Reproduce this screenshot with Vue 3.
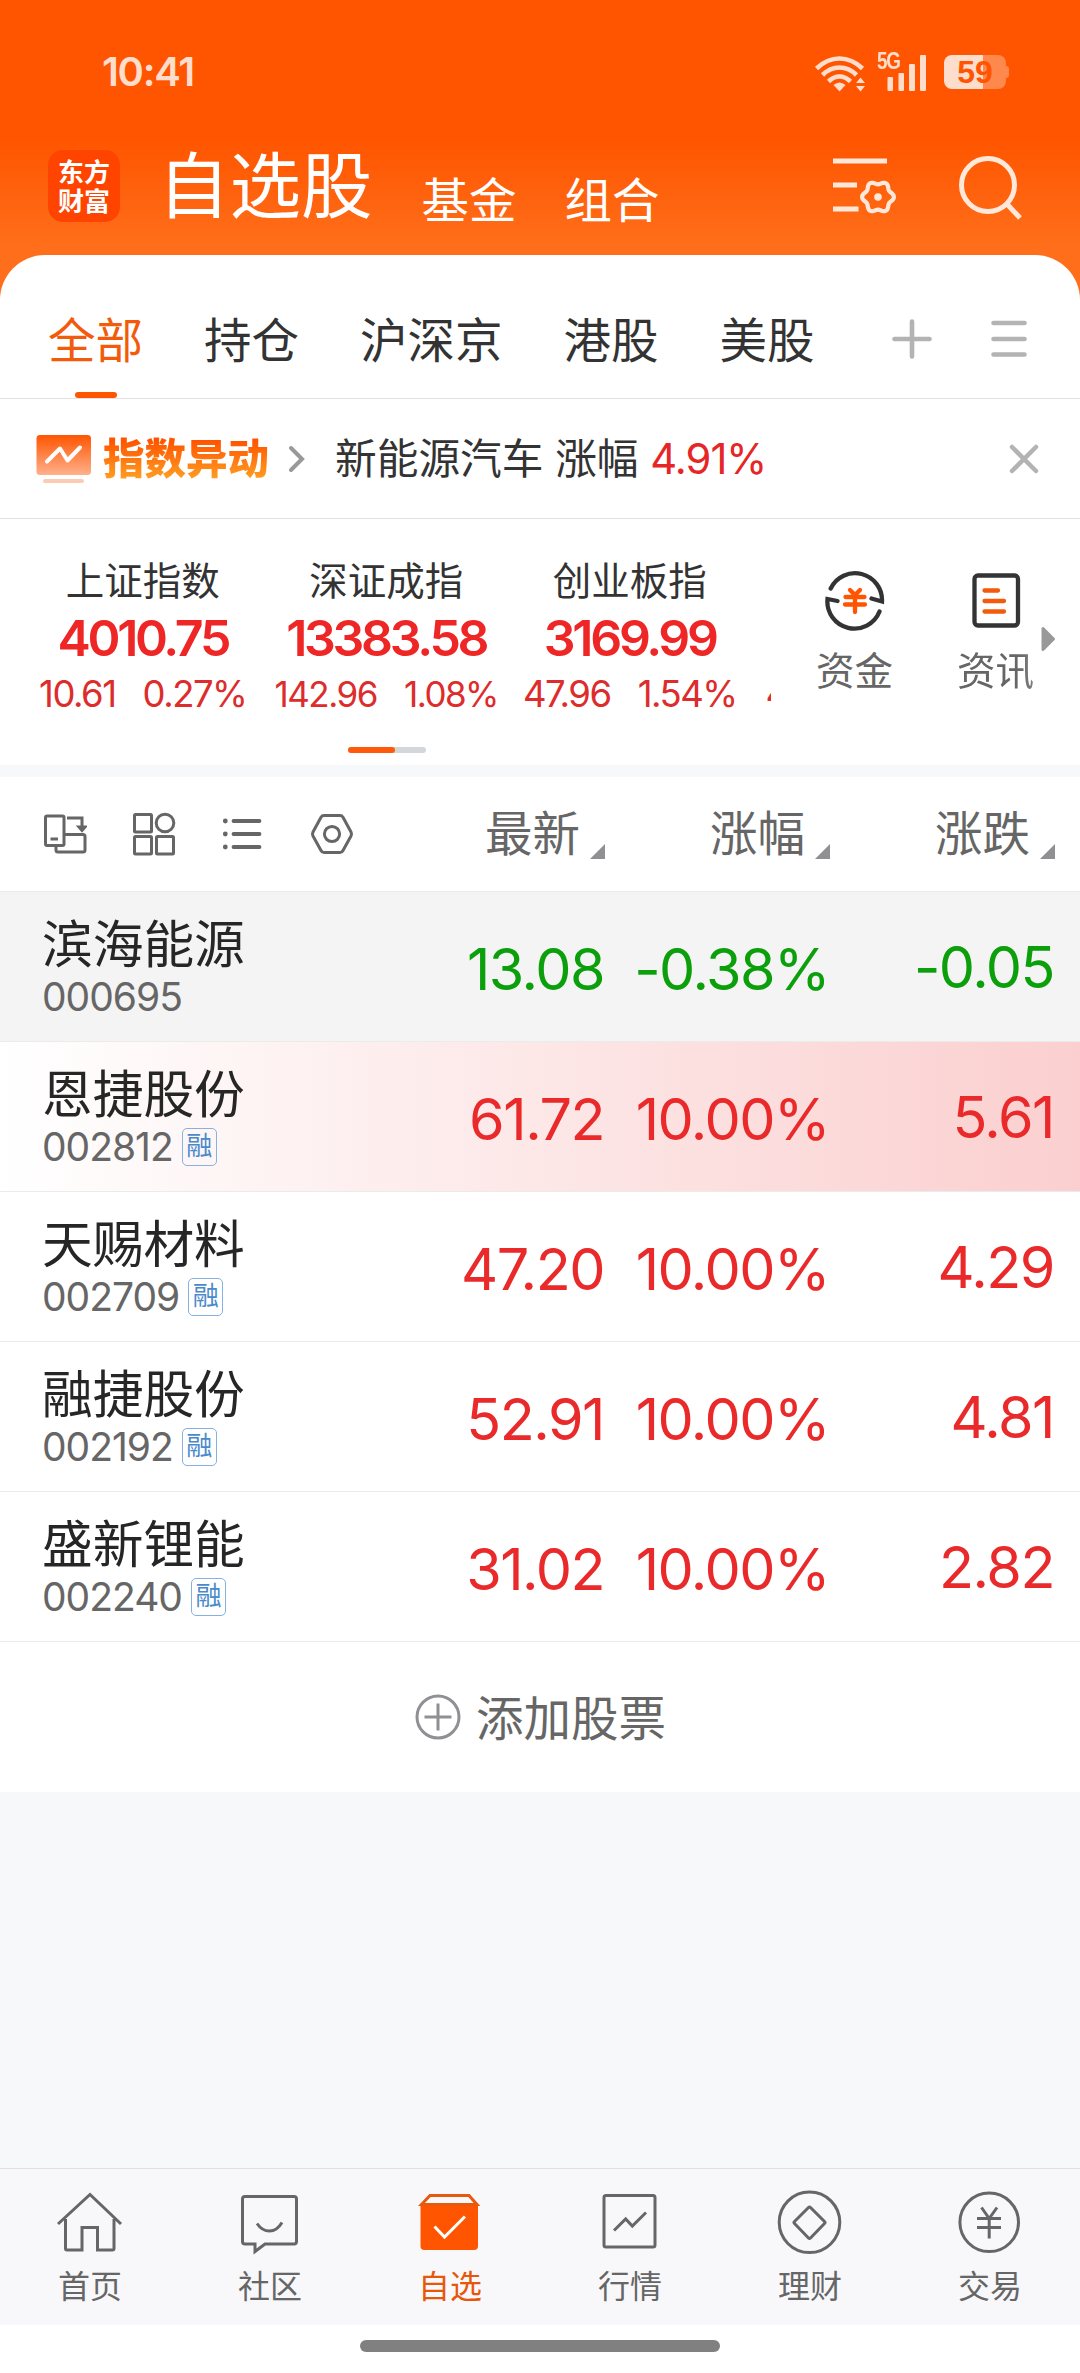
<script setup>
import { ref, computed } from 'vue'

const tabs = ['全部', '持仓', '沪深京', '港股', '美股']
const activeTab = ref('全部')

const indices = [
  { name: '上证指数', value: '4010.75', diff: '10.61', pct: '0.27%' },
  { name: '深证成指', value: '13383.58', diff: '142.96', pct: '1.08%', small: true },
  { name: '创业板指', value: '3169.99', diff: '47.96', pct: '1.54%' }
]

const columns = ['最新', '涨幅', '涨跌']

const stocks = ref([
  { name: '滨海能源', code: '000695', price: '13.08', pct: '-0.38%', diff: '-0.05', margin: false, state: 'pinned' },
  { name: '恩捷股份', code: '002812', price: '61.72', pct: '10.00%', diff: '5.61', margin: true, state: 'flash' },
  { name: '天赐材料', code: '002709', price: '47.20', pct: '10.00%', diff: '4.29', margin: true, state: '' },
  { name: '融捷股份', code: '002192', price: '52.91', pct: '10.00%', diff: '4.81', margin: true, state: '' },
  { name: '盛新锂能', code: '002240', price: '31.02', pct: '10.00%', diff: '2.82', margin: true, state: '' }
])

const navItems = ['首页', '社区', '自选', '行情', '理财', '交易']
const activeNav = ref('自选')

const trend = (stock) => (stock.diff.startsWith('-') ? 'down' : 'up')

// Six-lobed gear outline
const gearPath = computed(() => {
  const points = []
  for (let i = 0; i < 72; i++) {
    const a = (i * 5 * Math.PI) / 180
    const r = 14.3 + 1.6 * Math.cos(6 * a)
    points.push(`${(49 + r * Math.cos(a)).toFixed(2)} ${(41 + r * Math.sin(a)).toFixed(2)}`)
  }
  return `M${points.join('L')}Z`
})
</script>

<template>
  <div class="screen">
    <header class="header">
      <div class="status">
        <span class="time">10:41</span>
        <div class="status-icons">
          <svg class="wifi" viewBox="0 0 52 40" width="52" height="40">
            <g fill="none" stroke="#ffddcc" stroke-width="4.6">
              <path d="M2.5 16.5Q13 6.500 25.500 6.500T48.500 16.500" />
              <path d="M8.500 23Q16 15.500 25.500 15.500T42.500 23" />
              <path d="M14.500 29.500Q19.500 24.500 25.500 24.500T36.500 29.500" />
            </g>
            <path d="M19.500 33Q25.500 28 31.500 33L25.500 39.500Z" fill="#ffddcc" />
            <path d="M42 31L46.500 25.500L51 31ZM42 34L46.500 39.500L51 34Z" fill="#ffddcc" />
          </svg>
          <div class="signal">
            <span class="net">5G</span>
            <svg viewBox="0 0 40 38" width="40" height="38" fill="#ffddcc">
              <rect x="0.500" y="24" width="5.500" height="14" rx="1" />
              <rect x="11.500" y="20" width="5.500" height="18" rx="1" />
              <rect x="22" y="11" width="6" height="27" rx="1" />
              <rect x="33" y="2" width="6" height="36" rx="1" />
            </svg>
          </div>
          <div class="battery"><span>59</span></div>
        </div>
      </div>

      <div class="title-bar">
        <div class="logo"><span>东方</span><span>财富</span></div>
        <h1>自选股</h1>
        <span class="section">基金</span>
        <span class="section">组合</span>
        <svg class="filter" viewBox="0 0 68 64" width="68" height="64" fill="none" stroke="#ffe8da" stroke-width="5">
          <path d="M4 5H58M4 29H28M4 53H29.500" />
          <path :d="gearPath" stroke-width="4.200" />
          <circle cx="49" cy="41" r="3.800" fill="#ffe8da" stroke="none" />
        </svg>
        <svg class="search" viewBox="0 0 66 68" width="66" height="68" fill="none" stroke="#ffe8da" stroke-width="5">
          <circle cx="30" cy="32" r="26.500" />
          <path d="M49 51L62 65" />
        </svg>
      </div>
    </header>

    <main class="panel">
      <nav class="tabs">
        <span
          v-for="tab in tabs"
          :key="tab"
          class="tab"
          :class="{ active: tab === activeTab }"
          @click="activeTab = tab"
        >{{ tab }}</span>
        <svg class="tab-icon plus" viewBox="0 0 42 42" width="42" height="42">
          <path d="M21 3.500V38.500M3.500 21H38.500" />
        </svg>
        <svg class="tab-icon" viewBox="0 0 42 42" width="42" height="42">
          <path d="M5.500 5H36.500M5.500 21H36.500M5.500 36.500H36.500" />
        </svg>
      </nav>

      <div class="notice">
        <svg class="notice-icon" viewBox="0 0 56 50" width="56" height="50">
          <defs>
            <linearGradient id="noticeFill" x1="0" y1="0" x2="0" y2="1">
              <stop offset="0" stop-color="#ff5500" />
              <stop offset="1" stop-color="#ffb08c" />
            </linearGradient>
          </defs>
          <rect x="0.500" y="1" width="54.500" height="40" rx="3.500" fill="url(#noticeFill)" />
          <path d="M11 27.500L24 14.500L31.500 26.500L44 13.500" fill="none" stroke="#fff" stroke-width="4" stroke-linecap="round" stroke-linejoin="round" />
          <rect x="7" y="45" width="41" height="4" rx="2" fill="#fbcbb4" />
        </svg>
        <strong class="notice-title">指数异动</strong>
        <svg class="chevron" viewBox="0 0 18 30" width="18" height="30">
          <path d="M3 4L14 15L3 26" fill="none" stroke="#999" stroke-width="4" stroke-linecap="round" />
        </svg>
        <span class="notice-text">新能源汽车 涨幅 <em>4.91%</em></span>
        <svg class="close" viewBox="0 0 34 34" width="34" height="34">
          <path d="M5 5L29 29M29 5L5 29" fill="none" stroke="#b3b3b3" stroke-width="4.500" stroke-linecap="round" />
        </svg>
      </div>

      <section class="market">
        <div class="indices">
          <div v-for="item in indices" :key="item.name" class="index">
            <span class="index-name">{{ item.name }}</span>
            <span class="index-value">{{ item.value }}</span>
            <span class="index-change" :class="{ small: item.small }">
              <span>{{ item.diff }}</span><span>{{ item.pct }}</span>
            </span>
          </div>
          <div class="index peek"><span class="index-change">4</span></div>
        </div>
        <div class="shortcuts">
          <div class="shortcut">
            <svg viewBox="0 0 60 60" width="60" height="60" fill="none" stroke-linecap="round">
              <g stroke="#333" stroke-width="4.300">
                <path d="M5.700 17.500A27 27 0 0 1 57 30.500L46.500 27.500" />
                <path d="M54.500 40.500A27 27 0 0 1 2.500 28L12.500 30" />
              </g>
              <path d="M25 19L30 24L35 19M30 24V41M20.500 26H39.500M20 33.500H40" stroke="#ff5500" stroke-width="4.300" />
            </svg>
            <span>资金</span>
          </div>
          <div class="shortcut faded">
            <svg viewBox="0 0 60 60" width="60" height="60" fill="none" stroke-linecap="round">
              <rect x="8.500" y="4.500" width="43.500" height="50" rx="3.500" stroke="#333" stroke-width="4.300" />
              <path d="M18.500 19.500H32M18.500 30H38M18.500 40.500H38" stroke="#f25a0c" stroke-width="4.300" />
            </svg>
            <span>资讯</span>
          </div>
          <svg class="more" viewBox="0 0 16 26" width="16" height="26">
            <path d="M3 2.500V23.500L13.500 13Z" fill="#999" stroke="#999" stroke-width="3" stroke-linejoin="round" />
          </svg>
        </div>
      </section>
      <div class="pager"><i></i></div>

      <section class="table">
        <div class="row table-head">
          <div class="tools">
            <svg viewBox="0 0 44 44" width="44" height="44">
              <rect x="2.500" y="4" width="18.500" height="29.500" rx="1.500" />
              <path d="M7.500 27H15M21 22.500H40Q42 22.500 42 24.500V38Q42 40 40 40H15Q13 40 13 38V34M24 6H39V15" />
              <path d="M36 15H42L39 18.500Z" />
            </svg>
            <svg viewBox="0 0 44 44" width="44" height="44">
              <rect x="2.500" y="2.500" width="17" height="17.500" rx="1" />
              <circle cx="33" cy="11" r="8.800" />
              <rect x="2.500" y="24.500" width="17" height="17.500" rx="1" />
              <rect x="24.500" y="24.500" width="17" height="17.500" rx="1" />
            </svg>
            <svg viewBox="0 0 44 44" width="44" height="44">
              <path d="M12.500 9H38.500M12.500 22H38.500M12.500 35H38.500" stroke-width="3.800" stroke-linecap="round" />
              <path d="M4.300 9V9.100M4.300 22V22.100M4.300 35V35.100" stroke-width="4.800" stroke-linecap="round" />
            </svg>
            <svg viewBox="0 0 44 44" width="44" height="44">
              <path d="M14 3.500H30Q32 3.500 33 5.200L41 20Q42 22 41 24L33 38.500Q32 40.500 30 40.500H14Q12 40.500 11 38.500L3 24Q2 22 3 20L11 5.200Q12 3.500 14 3.500Z" />
              <circle cx="22" cy="22" r="7.600" />
            </svg>
          </div>
          <div v-for="column in columns" :key="column" class="column">
            {{ column }}<i class="sort"></i>
          </div>
        </div>

        <div v-for="stock in stocks" :key="stock.code" class="row stock" :class="stock.state">
          <div class="stock-info">
            <div class="stock-name">{{ stock.name }}</div>
            <div class="stock-code">
              {{ stock.code }}<span v-if="stock.margin" class="tag">融</span>
            </div>
          </div>
          <span class="num" :class="trend(stock)">{{ stock.price }}</span>
          <span class="num" :class="trend(stock)">{{ stock.pct }}</span>
          <span class="num last" :class="trend(stock)">{{ stock.diff }}</span>
        </div>

        <div class="add">
          <svg viewBox="0 0 48 48" width="48" height="48" fill="none" stroke="#8f8f94" stroke-width="3">
            <circle cx="24" cy="24" r="21" />
            <path d="M24 10.500V37.500M10.500 24H37.500" />
          </svg>
          <span>添加股票</span>
        </div>
      </section>
    </main>

    <footer class="bottom-nav">
      <div
        v-for="item in navItems"
        :key="item"
        class="nav-item"
        :class="{ active: item === activeNav }"
        @click="activeNav = item"
      >
        <svg viewBox="0 0 72 72" width="72" height="72">
          <path v-if="item === '首页'" d="M4 38L36 8.500L67 38M11.500 33V62.500Q11.500 64 13 64H28V41.500H43.500V64H58.500Q60 64 60 62.500V33" />
          <g v-else-if="item === '社区'">
            <path d="M11 10.500H60Q62.500 10.500 62.500 13V55.500Q62.500 58 60 58H31L21 65.500V58H11Q8.500 58 8.500 55.500V13Q8.500 10.500 11 10.500Z" />
            <path d="M23 37.500Q28 45 35.500 45T48 36.500" />
          </g>
          <g v-else-if="item === '自选'">
            <path class="solid" d="M6.500 18H64V60Q64 64 60 64H10.500Q6.500 64 6.500 60Z" />
            <path d="M7.500 18.500L16 9.500H55L63 18.500Z" />
            <path class="check" d="M20.500 40.500L30.500 51L51 30.500" />
          </g>
          <g v-else-if="item === '行情'">
            <rect x="10" y="9.500" width="51" height="51.500" rx="2" />
            <path d="M20 44.500L31.700 33L38.300 40L52 26.500" />
          </g>
          <g v-else-if="item === '理财'">
            <circle cx="35.500" cy="36.300" r="30.300" />
            <path d="M34.500 21.500Q35.500 20.500 36.500 21.500L50.500 35.500Q51.500 36.500 50.500 37.500L36.500 52Q35.500 53 34.500 52L20.500 37.500Q19.500 36.500 20.500 35.500Z" />
          </g>
          <g v-else>
            <circle cx="35.200" cy="36.300" r="29.300" />
            <path d="M27.500 21.500L35.200 32.500L43 21.500M35.200 32V52.500M23 32.500H47M23 41.500H47" />
          </g>
        </svg>
        <span>{{ item }}</span>
      </div>
    </footer>
    <div class="home-area"><div class="home-bar"></div></div>
  </div>
</template>

<style>
body {
  background: #f7f8fa;
}
</style>

<style scoped>
.screen {
  width: 1080px;
  height: 2373px;
  display: flex;
  flex-direction: column;
  overflow: hidden;
  background: #f7f8fa;
  color: #333;
  font-family: Inter, "Noto Sans CJK SC", sans-serif;
  white-space: nowrap;
}
.screen * {
  box-sizing: border-box;
}
svg {
  display: block;
  flex: none;
}

/* header */
.header {
  height: 300px;
  flex: none;
  background: linear-gradient(#ff5500 0, #ff5500 140px, #ff6e1a 245px);
}
.status {
  height: 140px;
  padding: 3px 74px 0 102px;
  display: flex;
  align-items: center;
  justify-content: space-between;
}
.time {
  font-size: 40px;
  font-weight: 600;
  letter-spacing: -1.3px;
  color: #ffddcc;
}
.status-icons {
  display: flex;
  align-items: center;
}
.wifi {
  margin-right: 11px;
}
.signal {
  position: relative;
  margin-right: 17px;
  padding-left: 10px;
}
.net {
  position: absolute;
  left: 0;
  top: -2px;
  font: 700 23px/20px "Liberation Sans", sans-serif;
  letter-spacing: -1.5px;
  transform: scaleX(0.82);
  transform-origin: 0 50%;
  color: #ffddcc;
}
.battery {
  position: relative;
  width: 62px;
  height: 34px;
  border-radius: 8px;
  background: linear-gradient(90deg, #ffddcc 39px, #ff884d 39px);
  text-align: center;
}
.battery::after {
  content: "";
  position: absolute;
  right: -3px;
  top: 11px;
  width: 3px;
  height: 12px;
  border-radius: 0 3px 3px 0;
  background: #ff884d;
}
.battery span {
  font: 700 32px/35px "Liberation Sans", sans-serif;
  color: #ff5500;
}
.title-bar {
  height: 92px;
  padding: 0 56px 0 48px;
  display: flex;
  align-items: center;
  color: #fff;
}
.logo {
  width: 72px;
  height: 72px;
  padding-top: 8px;
  border-radius: 15px;
  background: #ff4400;
  display: flex;
  flex-direction: column;
  align-items: center;
  font-size: 26px;
  line-height: 29px;
  font-weight: 700;
}
h1 {
  margin: 0 49px 0 38px;
  font-size: 71.5px;
  line-height: 92px;
  font-weight: 400;
}
.section {
  margin-right: 48px;
  padding-top: 29px;
  font-size: 47.5px;
  line-height: 60px;
}
.filter {
  margin-left: auto;
  margin-top: 4px;
}
.search {
  margin-left: 61px;
  margin-top: 2px;
}

/* white panel */
.panel {
  margin-top: -45px;
  border-radius: 45px 45px 0 0;
  background: #fff;
  flex: none;
}
.tabs {
  height: 144px;
  padding: 0 50px 0 48px;
  display: flex;
  gap: 61px;
  align-items: center;
  border-bottom: 1px solid #e2e2e2;
}
.tab {
  position: relative;
  padding-top: 28px;
  font-size: 47.5px;
  line-height: 115px;
}
.tab.active {
  color: #f25a0c;
}
.tab.active::after {
  content: "";
  position: absolute;
  left: 27px;
  bottom: 0;
  width: 42px;
  height: 6px;
  border-radius: 3px;
  background: #ff5500;
}
.tab-icon {
  margin-top: 24px;
  fill: none;
  stroke: #b3b3b3;
  stroke-width: 4.6;
  stroke-linecap: round;
}
.tab-icon.plus {
  margin-left: auto;
  margin-right: -6px;
}
.notice {
  height: 120px;
  padding: 0 39px 0 36px;
  display: flex;
  align-items: center;
  border-bottom: 1px solid #e2e2e2;
}
.notice-title {
  margin: 0 19px 0 11px;
  font-size: 41.5px;
  font-weight: 900;
  line-height: 60px;
  background: linear-gradient(#ff5500 20%, #ff9a20 80%);
  background-clip: text;
  color: transparent;
}
.chevron {
  margin-right: 29px;
}
.notice-text {
  font-size: 41.7px;
  line-height: 60px;
}
.notice-text em {
  font-style: normal;
  letter-spacing: -1px;
  color: #e62626;
}
.close {
  margin-left: auto;
}

/* indices */
.market {
  height: 228px;
  padding: 37px 24px 0 21px;
  display: flex;
}
.indices {
  width: 753px;
  display: flex;
  overflow: hidden;
}
.index {
  width: 243.5px;
  flex: none;
  display: flex;
  flex-direction: column;
  align-items: center;
}
.index-name {
  font-size: 38.5px;
  line-height: 50px;
}
.index-value {
  font-size: 50px;
  line-height: 65px;
  font-weight: 600;
  letter-spacing: -3.3px;
  color: #ee2626;
}
.index-change {
  display: flex;
  gap: 27px;
  font-size: 36.5px;
  line-height: 44px;
  padding-top: 1px;
  letter-spacing: -1.5px;
  color: #dd2c2c;
}
.index-change.small {
  font-size: 35px;
}
.index.peek {
  align-items: flex-start;
  padding: 115px 0 0 14px;
}
.shortcuts {
  flex: 1;
  padding-left: 13px;
  display: flex;
}
.shortcut {
  width: 141px;
  display: flex;
  flex-direction: column;
  align-items: center;
  padding-top: 15px;
  font-size: 38.5px;
  line-height: 60px;
  color: #666;
}
.shortcut span {
  padding-top: 10px;
}
.shortcut.faded {
  -webkit-mask-image: linear-gradient(90deg, #000 65%, rgba(0, 0, 0, 0.55) 100%);
  mask-image: linear-gradient(90deg, #000 65%, rgba(0, 0, 0, 0.55) 100%);
}
.more {
  margin: 70px 0 0 -26px;
}
.more,
.shortcut {
  flex: none;
}
.pager {
  width: 78px;
  height: 6px;
  margin: 0 0 12px 348px;
  border-radius: 3px;
  background: #d3d7da;
}
.pager i {
  display: block;
  width: 47px;
  height: 6px;
  border-radius: 3px;
  background: #ff5a0a;
}

/* stock table */
.table {
  border-top: 12px solid #f7f8fa;
}
.row {
  height: 150px;
  display: grid;
  grid-template-columns: 300px 262px 225px 225px;
  padding: 0 25px 0 42px;
  align-items: center;
  border-bottom: 1px solid #ebebeb;
}
.table-head {
  height: 115px;
  grid-template-columns: 300px 263px 225px 225px;
}
.tools {
  display: flex;
  gap: 45px;
  padding-left: 1px;
}
.tools svg {
  fill: none;
  stroke: #666;
  stroke-width: 3;
}
.column {
  display: flex;
  justify-content: flex-end;
  font-size: 47.5px;
  line-height: 60px;
  color: #666;
}
.sort {
  width: 15px;
  height: 15px;
  margin: 40px 0 0 10px;
  background: #8f8f94;
  clip-path: polygon(100% 0, 100% 100%, 0 100%);
}
.stock.pinned {
  background: #f4f4f4;
}
.stock.flash {
  background: linear-gradient(90deg, #fff 0, #fbcfcf 100%);
}
.stock-info {
  padding-top: 4px;
}
.stock-name {
  font-size: 50.7px;
  line-height: 56px;
  color: #262626;
}
.stock-code {
  display: flex;
  align-items: center;
  height: 48px;
  font-size: 39px;
  letter-spacing: -1px;
  color: #666;
}
.tag {
  width: 35px;
  height: 38px;
  margin-left: 9px;
  border: 1.5px solid #86b1e0;
  border-radius: 5px;
  font-size: 26px;
  line-height: 34px;
  letter-spacing: 0;
  text-align: center;
  color: #4a8acb;
}
.num {
  padding-top: 5px;
  font-size: 57.5px;
  letter-spacing: -1.5px;
  text-align: right;
}
.num.last {
  padding-top: 0;
}
.up {
  color: #ea2a2a;
}
.down {
  color: #0b9f0b;
}
.add {
  height: 150px;
  display: flex;
  align-items: center;
  justify-content: center;
  gap: 14px;
  font-size: 47.5px;
  line-height: 60px;
  color: #666;
}
.add span {
  padding-top: 3px;
}

/* bottom navigation */
.bottom-nav {
  height: 157px;
  margin-top: auto;
  flex: none;
  display: flex;
  border-top: 1px solid #e0e0e2;
  background: #f8f8fb;
}
.nav-item {
  width: 180px;
  padding-top: 17px;
  display: flex;
  flex-direction: column;
  align-items: center;
  font-size: 32px;
  line-height: 58px;
  color: #666;
}
.nav-item svg {
  fill: none;
  stroke: #666;
  stroke-width: 3;
}
.nav-item.active {
  color: #e6570c;
}
.nav-item.active svg {
  stroke: #e8590f;
}
.nav-item .solid {
  fill: #ff5500;
  stroke: none;
}
.nav-item .check {
  stroke: #fff;
}
.home-area {
  height: 48px;
  flex: none;
  padding-top: 15px;
  background: #fff;
}
.home-bar {
  width: 360px;
  height: 12px;
  margin: 0 auto;
  border-radius: 6px;
  background: #808080;
}
</style>
